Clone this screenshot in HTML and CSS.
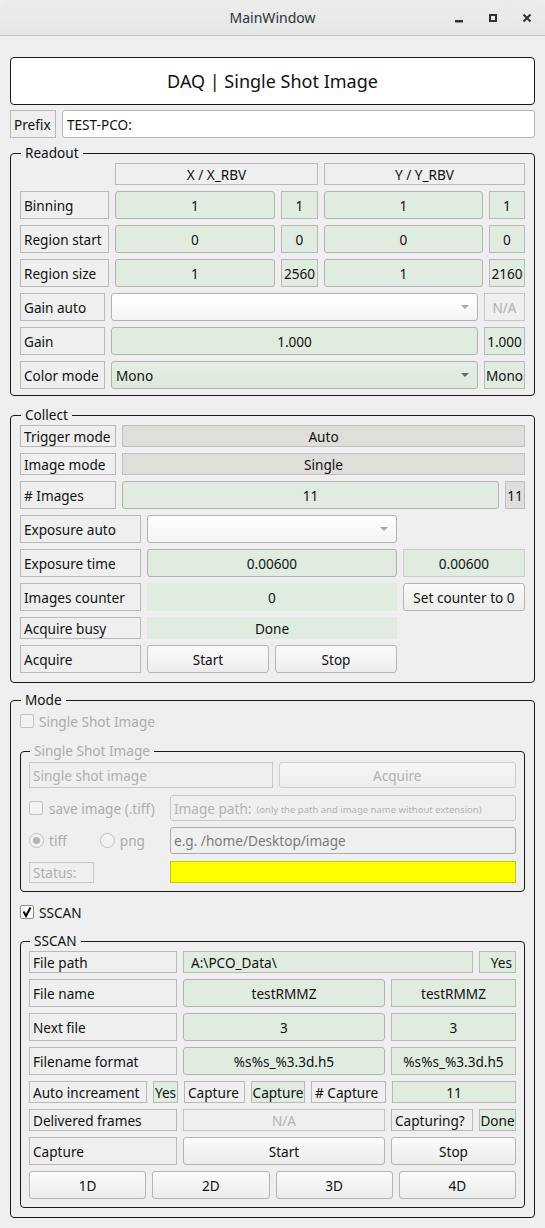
FILE: index.html
```html
<!DOCTYPE html>
<html>
<head>
<meta charset="utf-8">
<title>MainWindow</title>
<link rel="stylesheet" href="styles.css">
</head>
<body>
<div class="titlebar">
  <span></span>
  <span class="title">MainWindow</span>
  <span class="controls">
    <svg width="100" height="36" viewBox="0 0 100 36">
      <rect x="10" y="20" width="8" height="2.5" fill="#2e3436"/>
      <rect x="45" y="15" width="6" height="6" fill="none" stroke="#2e3436" stroke-width="2"/>
      <path d="M78.5 14.5 L85.5 21.5 M85.5 14.5 L78.5 21.5" stroke="#2e3436" stroke-width="2" fill="none"/>
    </svg>
  </span>
</div>

<main class="content">
  <div class="banner">DAQ | Single Shot Image</div>

  <div class="row h28 prefix-row">
    <div class="lbl w46">Prefix</div>
    <div class="edit white grow">TEST-PCO:</div>
  </div>

  <fieldset class="group readout">
    <legend>Readout</legend>
    <div class="gbody">
      <div class="row h22">
        <div class="w89"></div>
        <div class="lbl c w203">X / X_RBV</div>
        <div class="lbl c w201">Y / Y_RBV</div>
      </div>
      <div class="row h28">
        <div class="lbl w89">Binning</div>
        <div class="edit green c w160">1</div>
        <div class="lbl green c w37">1</div>
        <div class="edit green c w159">1</div>
        <div class="lbl green c w36">1</div>
      </div>
      <div class="row h28">
        <div class="lbl w89">Region start</div>
        <div class="edit green c w160">0</div>
        <div class="lbl green c w37">0</div>
        <div class="edit green c w159">0</div>
        <div class="lbl green c w36">0</div>
      </div>
      <div class="row h28">
        <div class="lbl w89">Region size</div>
        <div class="edit green c w160">1</div>
        <div class="lbl green c w37 tight">2560</div>
        <div class="edit green c w159">1</div>
        <div class="lbl green c w36 tight">2160</div>
      </div>
      <div class="row h28">
        <div class="lbl w85">Gain auto</div>
        <div class="combo w367"><span></span><svg class="arrow" width="8" height="5" viewBox="0 0 8 5"><path d="M0 0 L8 0 L4 4 Z" fill="#a9a9a9"/></svg></div>
        <div class="lbl c w41 dis">N/A</div>
      </div>
      <div class="row h28">
        <div class="lbl w85">Gain</div>
        <div class="edit green c w367">1.000</div>
        <div class="lbl green c w41 tight">1.000</div>
      </div>
      <div class="row h28">
        <div class="lbl w85">Color mode</div>
        <div class="combo gcombo w367"><span>Mono</span><svg class="arrow" width="8" height="5" viewBox="0 0 8 5"><path d="M0 0 L8 0 L4 4 Z" fill="#6a6a6a"/></svg></div>
        <div class="lbl green c w41 tight">Mono</div>
      </div>
    </div>
  </fieldset>

  <fieldset class="group collect">
    <legend>Collect</legend>
    <div class="gbody">
      <div class="row h22">
        <div class="lbl w96">Trigger mode</div>
        <div class="lbl grey c grow">Auto</div>
      </div>
      <div class="row h22">
        <div class="lbl w96">Image mode</div>
        <div class="lbl grey c grow">Single</div>
      </div>
      <div class="row h28">
        <div class="lbl w96"># Images</div>
        <div class="edit green c w377">11</div>
        <div class="lbl grey c grow tight">11</div>
      </div>
      <div class="row h28">
        <div class="lbl w121">Exposure auto</div>
        <div class="combo w250"><span></span><svg class="arrow" width="8" height="5" viewBox="0 0 8 5"><path d="M0 0 L8 0 L4 4 Z" fill="#a9a9a9"/></svg></div>
      </div>
      <div class="row h28">
        <div class="lbl w121">Exposure time</div>
        <div class="edit green c w250">0.00600</div>
        <div class="lbl green soft c w122">0.00600</div>
      </div>
      <div class="row h28">
        <div class="lbl w121">Images counter</div>
        <div class="lbl green flat c w250">0</div>
        <div class="btn w122">Set counter to 0</div>
      </div>
      <div class="row h22">
        <div class="lbl w121">Acquire busy</div>
        <div class="lbl green flat c w250">Done</div>
      </div>
      <div class="row h28">
        <div class="lbl w121">Acquire</div>
        <div class="btn w122">Start</div>
        <div class="btn w122">Stop</div>
      </div>
    </div>
  </fieldset>

  <fieldset class="group mode">
    <legend>Mode</legend>
    <div class="mbody">
      <div class="row h22 check-row dis-text">
        <span class="checkbox off"></span>
        <span>Single Shot Image</span>
      </div>

      <fieldset class="group inner ssi">
        <legend class="dis-text">Single Shot Image</legend>
        <div class="ibody">
          <div class="row h26">
            <div class="lbl dis grow half">Single shot image</div>
            <div class="btn dis grow half">Acquire</div>
          </div>
          <div class="row h26 r2">
            <div class="leftcol check-row dis-text">
              <span class="checkbox off small"></span>
              <span>save image (.tiff)</span>
            </div>
            <div class="edit plain dis grow"><span>Image path:</span><span class="hint">(only the path and image name without extension)</span></div>
          </div>
          <div class="row h27 r3">
            <div class="leftcol radios dis-text">
              <span class="radio on"></span><span class="rtxt">tiff</span>
              <span class="radio png"></span><span class="rtxt">png</span>
            </div>
            <div class="edit plain ph grow">e.g. /home/Desktop/image</div>
          </div>
          <div class="row h22 r4">
            <div class="leftcol"><div class="lbl dis w65">Status:</div></div>
            <div class="yellow grow"></div>
          </div>
        </div>
      </fieldset>

      <div class="row h22 check-row sscan-check">
        <span class="checkbox on"><svg width="12" height="12" viewBox="0 0 12 12"><path d="M2.5 5.5 L5 10 L9.5 1.5" stroke="#000" stroke-width="2" fill="none"/></svg></span>
        <span>SSCAN</span>
      </div>

      <fieldset class="group inner sscan">
        <legend>SSCAN</legend>
        <div class="gbody">
          <div class="row h22">
            <div class="lbl w148">File path</div>
            <div class="lbl green w290 left">A:\PCO_Data\</div>
            <div class="lbl green r w37">Yes</div>
          </div>
          <div class="row h28">
            <div class="lbl w148">File name</div>
            <div class="edit green c w202">testRMMZ</div>
            <div class="lbl green c grow">testRMMZ</div>
          </div>
          <div class="row h28">
            <div class="lbl w148">Next file</div>
            <div class="edit green c w202">3</div>
            <div class="lbl green c grow">3</div>
          </div>
          <div class="row h28">
            <div class="lbl w148">Filename format</div>
            <div class="edit green c w202">%s%s_%3.3d.h5</div>
            <div class="lbl green c grow">%s%s_%3.3d.h5</div>
          </div>
          <div class="row h22">
            <div class="lbl w118">Auto increament</div>
            <div class="lbl green c w25 tight">Yes</div>
            <div class="lbl w61">Capture</div>
            <div class="lbl green c w54 tight">Capture</div>
            <div class="lbl w75"># Capture</div>
            <div class="lbl green c grow">11</div>
          </div>
          <div class="row h22">
            <div class="lbl w148">Delivered frames</div>
            <div class="lbl c w202 na">N/A</div>
            <div class="lbl w82">Capturing?</div>
            <div class="lbl green c grow tight">Done</div>
          </div>
          <div class="row h28">
            <div class="lbl w148">Capture</div>
            <div class="btn w202">Start</div>
            <div class="btn grow">Stop</div>
          </div>
          <div class="row h28">
            <div class="btn grow eq">1D</div>
            <div class="btn grow eq">2D</div>
            <div class="btn grow eq">3D</div>
            <div class="btn grow eq">4D</div>
          </div>
        </div>
      </fieldset>
    </div>
  </fieldset>
</main>
</body>
</html>
```

FILE: styles.css
```css
* { box-sizing: border-box; }

html { background: #ffffff; }

body {
  margin: 0;
  width: 545px;
  height: 1228px;
  overflow: hidden;
  font-family: "Noto Sans", "DejaVu Sans", sans-serif;
  font-size: 13.6px;
  color: #111;
  background: #efefef;
}

/* title bar */
.titlebar {
  height: 36px;
  display: grid;
  grid-template-columns: 1fr auto 1fr;
  align-items: center;
  background: linear-gradient(#ececec, #e6e6e6);
  border-bottom: 1px solid #c6c6c6;
  border-radius: 7px 7px 0 0;
}
.title {
  font-size: 14px;
  color: #2e3436;
  padding-bottom: 1px;
}
.controls {
  justify-self: end;
  display: flex;
  height: 36px;
}

/* content */
.content {
  padding: 21px 10px 0;
}

.banner {
  height: 48px;
  border: 1px solid #1a1a1a;
  border-radius: 4px;
  background: #ffffff;
  font-size: 18px;
  display: flex;
  align-items: center;
  justify-content: center;
  padding-bottom: 1px;
}

.row {
  display: flex;
  gap: 6px;
}
.h22 { height: 22px; }
.h26 { height: 26px; }
.h27 { height: 27px; }
.h28 { height: 28px; }

.prefix-row { margin-top: 5px; }

.grow { flex: 1 1 0; min-width: 0; }

.w25 { width: 25px; }
.w36 { width: 36px; }
.w37 { width: 37px; }
.w41 { width: 41px; }
.w46 { width: 46px; }
.w54 { width: 54px; }
.w61 { width: 61px; }
.w65 { width: 65px; }
.w75 { width: 75px; }
.w82 { width: 82px; }
.w85 { width: 85px; }
.w89 { width: 89px; }
.w96 { width: 96px; }
.w118 { width: 118px; }
.w121 { width: 121px; }
.w122 { width: 122px; }
.w148 { width: 148px; }
.w159 { width: 159px; }
.w160 { width: 160px; }
.w201 { width: 201px; }
.w202 { width: 202px; }
.w203 { width: 203px; }
.w250 { width: 250px; }
.w290 { width: 290px; }
.w367 { width: 367px; }
.w377 { width: 377px; }

/* boxes */
.lbl, .edit, .combo, .btn {
  display: flex;
  align-items: center;
  white-space: nowrap;
  overflow: visible;
  flex-shrink: 0;
}
.lbl {
  border: 1px solid #b9b9b9;
  padding: 0 3px;
}
.c { justify-content: center; }
.r { justify-content: flex-end; }
.left { justify-content: flex-start; padding-left: 7px; }
.tight { padding: 0; }

.edit {
  border: 1px solid #b3b3b3;
  border-radius: 3px;
  padding: 0 4px;
}
.white { background: #ffffff; }
.green { background: #e0ece0; }
.grey { background: #e0dedb; border-color: #c2c0bd; }
.soft { border-color: #c8cfc8; }
.flat { border-color: #e0ece0; }
.na { color: #b3b3b3; border-color: #c4c4c4; }

.combo {
  border: 1px solid #b3b3b3;
  border-radius: 3px;
  background: linear-gradient(#ffffff, #f4f4f4);
  padding: 0 8px 0 4px;
  justify-content: space-between;
}
.gcombo { background: linear-gradient(#e4efe4, #dce9dc); }
.arrow { margin-top: 1px; }

.btn {
  justify-content: center;
  border: 1px solid #b5b5b5;
  border-radius: 3px;
  background: linear-gradient(#fbfbfb, #ececec);
}

.dis {
  color: #b0b0b0;
  border-color: #c8c8c8;
}
.btn.dis { background: linear-gradient(#f6f6f6, #ededed); border-color: #cdcdcd; }
.dis-text { color: #acacac; }

/* group boxes */
fieldset.group {
  margin: 0;
  border: 1px solid #1a1a1a;
  border-radius: 4px;
  min-width: 0;
}
fieldset.group > legend {
  padding: 0 4px;
  margin-left: 1px;
  height: 18px;
  line-height: 18px;
}
fieldset.readout { margin-top: 6px; padding: 1px 9px 6px; }
fieldset.collect { margin-top: 10px; padding: 1px 9px 9px; }
fieldset.mode { margin-top: 8px; padding: 1px 9px 9px; }

.gbody {
  display: flex;
  flex-direction: column;
  gap: 6px;
}
.mbody {
  display: flex;
  flex-direction: column;
}

fieldset.inner { padding: 1px 8px 8px; }
fieldset.ssi { margin-top: 10px; padding-top: 2px; }
fieldset.sscan { margin-top: 9px; }
.row.sscan-check { margin-top: 9px; }

.ibody { display: flex; flex-direction: column; }
.row.r2 { margin-top: 7px; }
.row.r3 { margin-top: 6px; }
.row.r4 { margin-top: 7px; }
.half { flex: 1 1 0; }

.leftcol {
  width: 135px;
  flex-shrink: 0;
  display: flex;
  align-items: center;
}

/* checkbox / radio */
.check-row {
  align-items: center;
  gap: 5px;
}
.checkbox {
  width: 14px;
  height: 14px;
  border: 1px solid #9c9c9c;
  border-radius: 2px;
  background: #fbfbfb;
  display: flex;
  align-items: center;
  justify-content: center;
  flex-shrink: 0;
}
.checkbox.off { border-color: #c4c4c4; background: #f2f2f2; }
.checkbox.on { border-color: #8c8c8c; background: #ffffff; }
.checkbox.small { margin-right: 1px; }

.radios { gap: 0; }
.radio {
  width: 15px;
  height: 15px;
  border: 1px solid #c2c2c2;
  border-radius: 50%;
  background: #f2f2f2;
  display: flex;
  align-items: center;
  justify-content: center;
  flex-shrink: 0;
}
.radio.on::after {
  content: "";
  width: 7px;
  height: 7px;
  border-radius: 50%;
  background: #b3b3b3;
}
.rtxt { margin-left: 5px; }
.radio.png { margin-left: 33px; }

.plain { background: #efefef; }
.edit.dis { border-color: #c8c8c8; color: #b3b3b3; padding-left: 3px; }
.hint { font-size: 9.5px; margin-left: 5px; margin-top: 3px; }
.ph { color: #7b7b7b; border-color: #ababab; padding-left: 3px; }

.yellow {
  background: #ffff00;
  border: 1px solid #c8c800;
}

.eq { flex: 1 1 0; }
```
